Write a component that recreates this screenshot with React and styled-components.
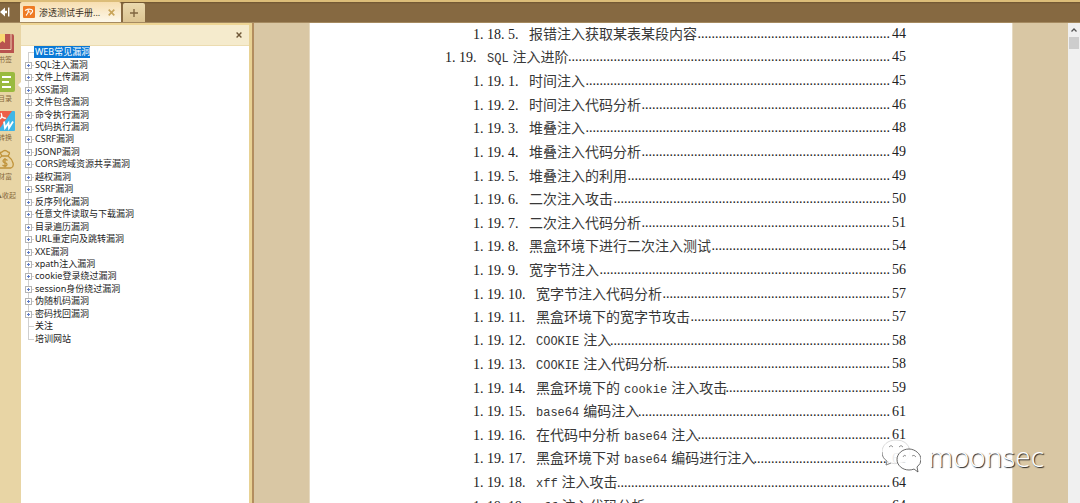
import React from 'react';
import styled, { createGlobalStyle } from 'styled-components';

const GlobalStyle = createGlobalStyle`
  *, *::before, *::after { box-sizing: border-box; }
  body { margin: 0; overflow: hidden; font-family: "Noto Sans", "Noto Sans CJK SC", sans-serif; }
  button { border: 0; padding: 0; margin: 0; background: none; font: inherit; color: inherit; }
  ul, ol { list-style: none; margin: 0; padding: 0; }
`;

const Window = styled.div`
  position: relative;
  display: flex;
  flex-direction: column;
  height: 100vh;
  overflow: hidden;
  background: #e8d5a5;
`;

const TabBar = styled.header`
  display: flex;
  align-items: flex-end;
  flex: none;
  height: 23px;
  background: linear-gradient(#6f5430, #866941 2px);
  border-top: 2px solid #dcbd79;
  border-bottom: 1px solid #a58a60;
`;

const CollapseButton = styled.button`
  width: 20px;
  height: 20px;
  display: flex;
  align-items: center;
`;

const Tab = styled.div`
  display: flex;
  align-items: center;
  width: 101px;
  height: 20px;
  padding: 0 6px 0 3px;
  gap: 4px;
  border-radius: 2px 2px 0 0;
  background: linear-gradient(#f7deb0, #fdf8ea);
  font-size: 9px;
  color: #3a3226;
`;

const TabTitle = styled.span`
  flex: 1;
  white-space: nowrap;
`;

const CloseButton = styled.button`
  display: flex;
  color: ${(p) => p.$color};
`;

const NewTabButton = styled.button`
  display: flex;
  align-items: center;
  justify-content: center;
  width: 22px;
  height: 19px;
  margin-left: 2px;
  border-radius: 2px 2px 0 0;
  background: linear-gradient(#ead9ae, #dcc491);
`;

const Main = styled.div`
  display: flex;
  flex: 1;
  min-height: 0;
`;

const Rail = styled.nav`
  display: flex;
  flex-direction: column;
  flex: none;
  width: 21px;
  padding-top: 9px;
  gap: 4px;
`;

const RailItem = styled.button`
  position: relative;
  display: flex;
  flex-direction: column;
  align-items: flex-end;
  width: 15px;
  height: 35px;
  font-size: 7px;
  line-height: 12px;
  color: #86683c;
  white-space: nowrap;

  &::after {
    content: "";
    display: ${(p) => (p.$active ? 'block' : 'none')};
    position: absolute;
    right: -6px;
    top: 11px;
    border: solid transparent;
    border-width: 3px 3px 3px 0;
    border-right-color: #fff;
  }
`;

const RailLabel = styled.span`
  padding-right: 3px;
`;

const FoldButton = styled.button`
  display: flex;
  justify-content: flex-end;
  width: 16px;
  font-size: 7px;
  line-height: 16px;
  color: #86683c;
  white-space: nowrap;
`;

const Outline = styled.aside`
  flex: none;
  width: 231px;
  border-right: 3px solid #e8d294;
  display: flex;
  flex-direction: column;
  background: #fff;
`;

const OutlineHeader = styled.div`
  display: flex;
  align-items: center;
  justify-content: flex-end;
  flex: none;
  height: 23px;
  padding-right: 7px;
  background: #f5ebcd;
  border-top: 2px solid #eed594;
  border-bottom: 1px solid #ecdcb0;
`;

const Tree = styled.ul`
  display: grid;
  grid-template-rows: repeat(24, minmax(0, 1fr));
  height: 299px;
  flex: none;
  padding-left: 2px;
`;

const TreeItem = styled.li`
  display: flex;
  align-items: center;
`;

const TreeLabel = styled.span`
  padding: 0 0 0 1px;
  font-size: 9px;
  line-height: 12px;
  white-space: nowrap;
  color: ${(p) => (p.$selected ? '#fff' : '#1c1c1c')};
  background: ${(p) => (p.$selected ? '#0a78d6' : 'none')};
`;

const Splitter = styled.div`
  width: 2px;
  flex: none;
  background: #b38d5e;
`;

const Viewer = styled.main`
  display: flex;
  justify-content: center;
  flex: 1;
  min-width: 0;
  background: #d9c7a4;
`;

const Paper = styled.article`
  width: 100%;
  max-width: 704px;
  padding: 0 106px 0 135px;
  background: #fff;
  border: solid #e6dac2;
  border-width: 0 1px;
  overflow: hidden;
`;

const Toc = styled.ol`
  display: grid;
  grid-template-columns: minmax(0, 1fr);
  grid-template-rows: repeat(21, minmax(0, 1fr));
  height: 496px;
  margin-top: -1px;
`;

const TocRow = styled.li`
  display: flex;
  align-items: center;
  padding-left: ${(p) => (p.$top ? 0 : 28)}px;
  font: 14px/22px "Liberation Serif", "Noto Sans CJK SC", serif;
  color: #222;
  white-space: nowrap;
`;

const TocLabel = styled.span`
  display: flex;
  align-items: baseline;
  flex: none;
`;

const NumberPart = styled.span`
  width: ${(p) => p.$chars * 7}px;
`;

const Title = styled.span`
  display: flex;
  align-items: baseline;
  gap: 4px;
  margin-left: 7px;
  color: #383838;
`;

const Mono = styled.span`
  font-family: "Liberation Mono", monospace;
  font-size: 12px;
`;

const Han = styled.span`
  font-family: "Noto Sans CJK SC", sans-serif;
`;

const Leader = styled.span`
  display: flex;
  justify-content: flex-end;
  flex: 1;
  min-width: 0;
`;

const PageNumber = styled.span`
  flex: none;
  margin-left: 2px;
`;

const ScrollBar = styled.div`
  display: flex;
  flex-direction: column;
  align-items: center;
  flex: none;
  width: 12px;
  background: #f0f0f0;
`;

const ScrollUp = styled.button`
  display: flex;
  align-items: center;
  justify-content: center;
  width: 12px;
  height: 14px;
`;

const ScrollThumb = styled.div`
  width: 10px;
  height: 12px;
  background: #cdcdcd;
`;

const Watermark = styled.div`
  position: absolute;
  right: 36px;
  bottom: 30px;
  display: flex;
  align-items: center;
  gap: 7px;
  font: 300 28px/34px "Open Sans", sans-serif;
  color: #fff;
  text-shadow: 1px 1px 1px #222;
`;

const chapters = [
  'WEB常见漏洞', 'SQL注入漏洞', '文件上传漏洞', 'XSS漏洞', '文件包含漏洞', '命令执行漏洞',
  '代码执行漏洞', 'CSRF漏洞', 'JSONP漏洞', 'CORS跨域资源共享漏洞', '越权漏洞', 'SSRF漏洞',
  '反序列化漏洞', '任意文件读取与下载漏洞', '目录遍历漏洞', 'URL重定向及跳转漏洞', 'XXE漏洞',
  'xpath注入漏洞', 'cookie登录绕过漏洞', 'session身份绕过漏洞', '伪随机码漏洞', '密码找回漏洞',
  '关注', '培训网站',
];

const sections = [
  ['1.18.5.', '报错注入获取某表某段内容', 44],
  ['1.19.', 'SQL 注入进阶', 45],
  ['1.19.1.', '时间注入', 45],
  ['1.19.2.', '时间注入代码分析', 46],
  ['1.19.3.', '堆叠注入', 48],
  ['1.19.4.', '堆叠注入代码分析', 49],
  ['1.19.5.', '堆叠注入的利用', 49],
  ['1.19.6.', '二次注入攻击', 50],
  ['1.19.7.', '二次注入代码分析', 51],
  ['1.19.8.', '黑盒环境下进行二次注入测试', 54],
  ['1.19.9.', '宽字节注入', 56],
  ['1.19.10.', '宽字节注入代码分析', 57],
  ['1.19.11.', '黑盒环境下的宽字节攻击', 57],
  ['1.19.12.', 'COOKIE 注入', 58],
  ['1.19.13.', 'COOKIE 注入代码分析', 58],
  ['1.19.14.', '黑盒环境下的 cookie 注入攻击', 59],
  ['1.19.15.', 'base64 编码注入', 61],
  ['1.19.16.', '在代码中分析 base64 注入', 61],
  ['1.19.17.', '黑盒环境下对 base64 编码进行注入', 62],
  ['1.19.18.', 'xff 注入攻击', 64],
  ['1.19.19.', 'xff 注入代码分析', 64],
];

function TreeNode({ index, last }) {
  const leaf = index === 0 || index >= last - 1;
  return (
    <svg width="11" height="12" viewBox="0 0 11 12" aria-hidden="true" overflow="visible">
      <path
        d={`M${leaf ? 5.5 : 8} 6.5H11M5.5 ${index === 0 ? 6 : -1}V${index === last ? 7 : 13}`}
        stroke="#cfcfcf"
        fill="none"
      />
      {!leaf && (
        <g fill="none">
          <rect x="2.5" y="3.5" width="6" height="6" fill="#fff" stroke="#b4b4b4" />
          <path d="M4 6.5H7M5.5 5V8" stroke="#5f7cc8" />
        </g>
      )}
    </svg>
  );
}

const isHan = (s) => /[\u4e00-\u9fff]/.test(s);

function TocEntry({ number, title, page }) {
  const top = number === '1.19.';
  const words = title.split(' ');
  const labelWidth =
    (number.length + 1) * 7 +
    words.reduce((sum, s) => sum + s.length * (isHan(s) ? 14 : 7), 0) +
    (words.length - 1) * 3;
  const dots = Math.floor(((top ? 461 : 433) - 16 - labelWidth) / 3.5);
  return (
    <TocRow $top={top}>
      <TocLabel>
        {number.match(/\d+\./g).map((part, i) => (
          <NumberPart key={i} $chars={part.length}>{part}</NumberPart>
        ))}
        <Title>
          {words.map((s, i) => (isHan(s) ? <Han key={i}>{s}</Han> : <Mono key={i}>{s}</Mono>))}
        </Title>
      </TocLabel>
      <Leader aria-hidden="true"><span>{'.'.repeat(dots)}</span></Leader>
      <PageNumber>{page}</PageNumber>
    </TocRow>
  );
}

function Cross({ size }) {
  return (
    <svg width={size} height={size} viewBox="0 0 6 6" aria-hidden="true">
      <path d="M.6.6 5.4 5.4M5.4.6.6 5.4" stroke="currentColor" strokeWidth="1.4" />
    </svg>
  );
}

export default function App() {
  return (
    <Window>
      <GlobalStyle />
      <TabBar>
        <CollapseButton aria-label="收起">
          <svg width="10" height="12" viewBox="0 0 10 12" fill="#fff">
            <path d="M0 6 5 1.5V4.7H7V7.3H5V10.5ZM8 1.5H9.4V10.5H8Z" />
          </svg>
        </CollapseButton>
        <Tab>
          <svg width="12" height="12" viewBox="0 0 12 12" aria-hidden="true">
            <rect width="12" height="12" rx="1" fill="#ee7a24" />
            <path d="M2 4.5Q5.5 2.5 8.5 3.5Q10.5 4.5 9 6.5L7 8.5M5.5 3.5Q5.5 7 3 9.5M5.5 6H7.5" fill="none" stroke="#fff" strokeWidth="1.1" />
          </svg>
          <TabTitle>渗透测试手册...</TabTitle>
          <CloseButton aria-label="关闭标签" $color="#c9a55a"><Cross size={7} /></CloseButton>
        </Tab>
        <NewTabButton aria-label="新标签">
          <svg width="8" height="8" viewBox="0 0 8 8"><path d="M4 0V8M0 4H8" stroke="#806640" strokeWidth="1.4" /></svg>
        </NewTabButton>
      </TabBar>
      <Main>
        <Rail>
          <RailItem>
            <svg width="15" height="22" viewBox="0 0 15 22" aria-hidden="true">
              <path d="M0 2H12Q14 2 14 4V21H1Q-1 21-1 18Z" fill="#b9534f" />
              <path d="M11 2V17.5H0" fill="none" stroke="#ecd3b0" />
              <path d="M0 2H5V11L2.5 9 0 11Z" fill="#f9d872" />
            </svg>
            <RailLabel>书签</RailLabel>
          </RailItem>
          <RailItem $active>
            <svg width="15" height="22" viewBox="0 0 15 22" aria-hidden="true">
              <rect x="-5" y="1" width="20" height="20" rx="2" fill="#9aba3f" />
              <path d="M2 6H11M2 11H9M2 16H11" stroke="#fff" strokeWidth="2" />
            </svg>
            <RailLabel>目录</RailLabel>
          </RailItem>
          <RailItem>
            <svg width="15" height="22" viewBox="0 0 15 22" aria-hidden="true">
              <rect x="-5" y="1" width="20" height="20" rx="1" fill="#3fb6e6" />
              <path d="M0 1H12L0 18Z" fill="#ee5f48" />
              <path d="M0 9Q3 7 1 3M1 6Q4 9 6 8" fill="none" stroke="#fff" strokeWidth="1.3" />
              <path d="M4 11.5 5 18 8.5 13 9 18 13 11.5" fill="none" stroke="#fff" strokeWidth="1.8" />
            </svg>
            <RailLabel>转换</RailLabel>
          </RailItem>
          <RailItem>
            <svg width="15" height="22" viewBox="0 0 15 22" aria-hidden="true" fill="none" stroke="#c0933a" strokeWidth="1.3">
              <path d="M2 7Q-1 3 2 3Q5 0 8 3Q11 3 8 7ZM2 7Q-5 12-4 19H11Q14 18 13 14Q12 10 8 7" />
              <path d="M7.5 11.5Q6 10 4 10.5Q2 12 4 13.5L6 14Q8 15.5 6 17Q4 17.5 2.5 16M5 9V18.5" />
            </svg>
            <RailLabel>财富</RailLabel>
          </RailItem>
          <FoldButton>▲收起</FoldButton>
        </Rail>
        <Outline>
          <OutlineHeader>
            <CloseButton aria-label="关闭目录" $color="#6f5838"><Cross size={6} /></CloseButton>
          </OutlineHeader>
          <Tree>
            {chapters.map((name, i) => (
              <TreeItem key={name}>
                <TreeNode index={i} last={chapters.length - 1} />
                <TreeLabel $selected={i === 0}>{name}</TreeLabel>
              </TreeItem>
            ))}
          </Tree>
        </Outline>
        <Splitter />
        <Viewer>
          <Paper>
            <Toc>
              {sections.map(([number, title, page]) => (
                <TocEntry key={number} number={number} title={title} page={page} />
              ))}
            </Toc>
          </Paper>
        </Viewer>
        <ScrollBar>
          <ScrollUp aria-label="向上滚动">
            <svg width="6" height="4" viewBox="0 0 6 4"><path d="M.5 3.5 3 1 5.5 3.5" fill="none" stroke="#555" strokeWidth="1.3" /></svg>
          </ScrollUp>
          <ScrollThumb />
        </ScrollBar>
      </Main>
      <Watermark>
        <svg width="39" height="34" viewBox="0 0 39 34" aria-hidden="true">
          <path d="M14 1C6 1 0 6 0 13Q0 19 5 22L4 26 9 24Q12 25 16 24.5Q28 22 28 12Q26 1 14 1Z" fill="#fff" fillOpacity=".9" stroke="#ccc" strokeWidth=".7" />
          <path d="M0 13Q0 19 5 22L4 26 9 24" fill="none" stroke="#666" strokeWidth=".7" />
          <path d="M27 10C20 10 15 15 15 20.5S20 31 27 31Q30 31 32 30L36 33 35 28Q39 25 39 20.5C39 15 33 10 27 10Z" fill="#fff" fillOpacity=".85" stroke="#444" strokeWidth=".8" />
          <path d="M7 8Q9 5 11 8M17 8Q19 5 21 8M21 18Q22 15 24 17M30 17Q32 15 34 18" fill="none" stroke="#777" strokeWidth=".8" />
        </svg>
        <span>moonsec</span>
      </Watermark>
    </Window>
  );
}
